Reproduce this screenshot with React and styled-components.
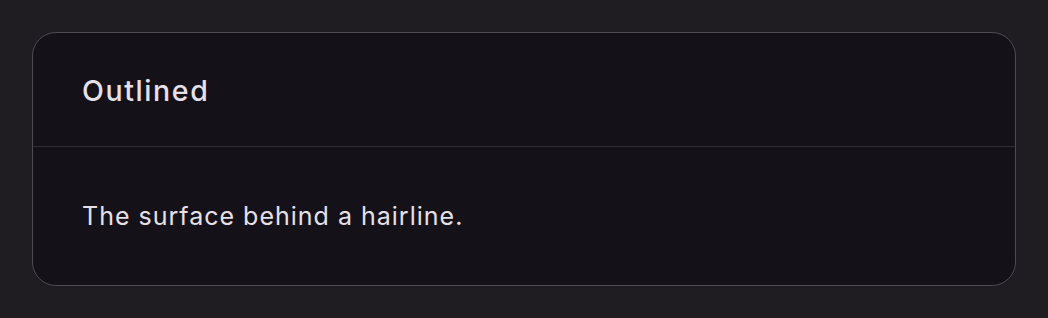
import React from 'react'
import styled, { createGlobalStyle } from 'styled-components'

const GlobalStyle = createGlobalStyle`
  html, body {
    margin: 0;
    padding: 0;
    background: #1f1d22;
  }
  body {
    font-family: Inter, "Noto Sans", sans-serif;
    -webkit-font-smoothing: antialiased;
  }
`

export default function App() {
  return (
    <>
      <GlobalStyle />
      <Page>
        <Card>
          <Header>
            <Title>Outlined</Title>
          </Header>
          <Body>
            <Text>The surface behind a hairline.</Text>
          </Body>
        </Card>
      </Page>
    </>
  )
}

const Page = styled.div`
  padding: 32px;
  width: 1048px;
  height: 318px;
  box-sizing: border-box;
`

const Card = styled.section`
  display: flex;
  flex-flow: column;
  border: 1px solid #4d4a53;
  border-radius: 24px;
  background: #141218;
  overflow: hidden;
`

const Header = styled.div`
  display: flex;
  align-items: center;
  height: 114px;
  padding: 2px 48px 0 49px;
  border-bottom: 1px solid #302d35;
  box-sizing: border-box;
`

const Title = styled.h2`
  margin: 0;
  color: #e6e0e9;
  font-size: 28.5px;
  font-weight: 450;
  letter-spacing: 1.6px;
  line-height: 36px;
`

const Body = styled.div`
  display: flex;
  align-items: center;
  height: 138px;
  padding: 0 48px 0 49px;
  box-sizing: border-box;
`

const Text = styled.p`
  margin: 0;
  color: #e6e0e9;
  font-size: 25px;
  font-weight: 400;
  letter-spacing: 1px;
  line-height: 32px;
`
